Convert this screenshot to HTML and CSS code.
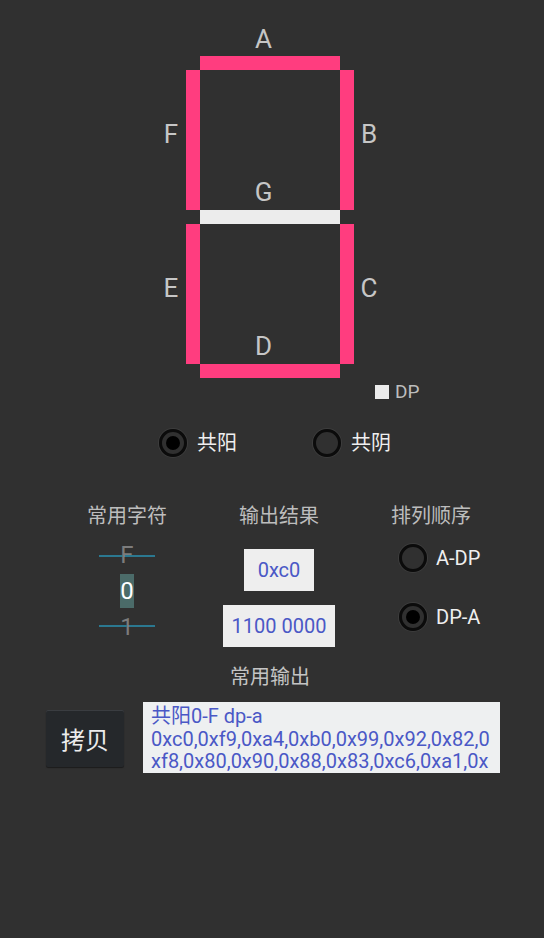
FILE: index.html
```html
<!DOCTYPE html>
<html lang="zh">
<head>
<meta charset="utf-8">
<title>七段数码管</title>
<link rel="stylesheet" href="styles.css">
</head>
<body>
<div class="app">
  <div class="display">
    <span class="lbl lbl-a">A</span>
    <div class="seg on seg-a"></div>
    <span class="lbl lbl-f">F</span>
    <div class="seg on seg-f"></div>
    <span class="lbl lbl-g">G</span>
    <div class="seg on seg-b"></div>
    <span class="lbl lbl-b">B</span>
    <div class="seg off seg-g"></div>
    <span class="lbl lbl-e">E</span>
    <div class="seg on seg-e"></div>
    <span class="lbl lbl-d">D</span>
    <div class="seg on seg-c"></div>
    <span class="lbl lbl-c">C</span>
    <div class="seg on seg-d"></div>
  </div>

  <div class="dp">
    <span class="dp-box"></span>
    <span class="dp-text">DP</span>
  </div>

  <div class="mode">
    <label class="radio"><span class="ring checked"></span><span class="radio-text">共阳</span></label>
    <label class="radio"><span class="ring"></span><span class="radio-text">共阴</span></label>
  </div>

  <div class="cols">
    <div class="col">
      <div class="col-title">常用字符</div>
      <div class="picker">
        <div class="pick-row faded">F</div>
        <div class="pick-row sel"><span class="sel-val">0</span></div>
        <div class="pick-row faded">1</div>
      </div>
    </div>
    <div class="col">
      <div class="col-title">输出结果</div>
      <div class="result">
        <div class="out">0xc0</div>
        <div class="out">1100 0000</div>
      </div>
    </div>
    <div class="col">
      <div class="col-title">排列顺序</div>
      <div class="order">
        <label class="radio"><span class="ring"></span><span class="radio-text">A-DP</span></label>
        <label class="radio"><span class="ring checked"></span><span class="radio-text">DP-A</span></label>
      </div>
    </div>
  </div>

  <div class="section-title">常用输出</div>

  <div class="copy-row">
    <button class="copy-btn">拷贝</button>
    <div class="text-out">共阳0-F dp-a<br>0xc0,0xf9,0xa4,0xb0,0x99,0x92,0x82,0<br>xf8,0x80,0x90,0x88,0x83,0xc6,0xa1,0x</div>
  </div>
</div>
</body>
</html>
```

FILE: styles.css
```css
html, body {
  margin: 0;
  padding: 0;
  background: #303030;
}

body {
  width: 544px;
  height: 938px;
  overflow: hidden;
  font-family: "Roboto", "Noto Sans CJK SC", sans-serif;
}

.app {
  display: flex;
  flex-direction: column;
}

/* seven segment display */
.display {
  display: grid;
  grid-template-columns: 30px 14px 140px 14px 30px;
  grid-template-rows: 56px 14px 140px 14px 140px 14px;
  padding-left: 156px;
}

.seg.on { background: #ff3d7f; }
.seg.off { background: #ececec; }

.lbl {
  font-size: 26px;
  line-height: 26px;
  color: #c6c6c6;
  text-align: center;
}

.lbl-a { grid-column: 3; grid-row: 1; justify-self: center; align-self: end; margin-bottom: 4px; margin-right: 13px; }
.seg-a { grid-column: 3; grid-row: 2; }
.lbl-f { grid-column: 1; grid-row: 3; align-self: start; margin-top: 51px; }
.seg-f { grid-column: 2; grid-row: 3; }
.lbl-g { grid-column: 3; grid-row: 3; justify-self: center; align-self: end; margin-bottom: 5px; margin-right: 13px; }
.seg-b { grid-column: 4; grid-row: 3; }
.lbl-b { grid-column: 5; grid-row: 3; align-self: start; margin-top: 51px; }
.seg-g { grid-column: 3; grid-row: 4; }
.lbl-e { grid-column: 1; grid-row: 5; align-self: start; margin-top: 51px; }
.seg-e { grid-column: 2; grid-row: 5; }
.lbl-d { grid-column: 3; grid-row: 5; justify-self: center; align-self: end; margin-bottom: 5px; margin-right: 13px; }
.seg-c { grid-column: 4; grid-row: 5; }
.lbl-c { grid-column: 5; grid-row: 5; align-self: start; margin-top: 51px; }
.seg-d { grid-column: 3; grid-row: 6; }

/* decimal point */
.dp {
  display: flex;
  align-items: center;
  gap: 6px;
  height: 14px;
  margin-top: 7px;
  padding-left: 375px;
}

.dp-box {
  width: 14px;
  height: 14px;
  background: #ececec;
}

.dp-text {
  font-size: 19px;
  line-height: 14px;
  color: #bdbdbd;
}

/* radio buttons */
.mode {
  display: flex;
  gap: 76px;
  margin-top: 30px;
  padding-left: 159px;
}

.radio {
  display: flex;
  align-items: center;
  gap: 10px;
  height: 28px;
}

.ring {
  box-sizing: border-box;
  width: 28px;
  height: 28px;
  border: 3px solid #0b0b0b;
  border-radius: 50%;
  box-shadow: 0 0 0 1px rgba(70, 70, 70, 0.6);
  display: flex;
  align-items: center;
  justify-content: center;
}

.ring.checked::after {
  content: "";
  width: 14px;
  height: 14px;
  border-radius: 50%;
  background: #000;
}

.radio-text {
  font-size: 20px;
  line-height: 28px;
  color: #efefef;
}

/* three columns */
.cols {
  display: grid;
  grid-template-columns: repeat(3, 152px);
  margin-top: 45px;
  padding-left: 51px;
}

.col {
  display: flex;
  flex-direction: column;
  align-items: center;
}

.col-title {
  font-size: 20px;
  line-height: 28px;
  color: #bdbdbd;
}

.picker {
  position: relative;
  width: 56px;
  margin-top: 7px;
  display: flex;
  flex-direction: column;
  align-items: center;
}

.picker::before,
.picker::after {
  content: "";
  position: absolute;
  left: 0;
  right: 0;
  height: 2px;
  background: #2b7890;
}

.picker::before { top: 18px; }
.picker::after { top: 88px; }

.pick-row {
  height: 36px;
  font-size: 24px;
  line-height: 36px;
  display: flex;
  align-items: center;
}

.pick-row.faded {
  color: #7c7c7c;
  position: relative;
  z-index: 1;
}

.sel-val {
  display: block;
  height: 34px;
  line-height: 34px;
  background: #4b6b69;
  color: #ffffff;
}

.result {
  margin-top: 19px;
  display: flex;
  flex-direction: column;
  align-items: center;
  gap: 14px;
}

.out {
  box-sizing: border-box;
  height: 42px;
  min-width: 70px;
  padding: 0 8.5px;
  background: #eeeeee;
  color: #4a58c6;
  font-size: 20px;
  line-height: 42px;
  text-align: center;
  white-space: nowrap;
}

.order {
  align-self: stretch;
  margin-top: 14px;
  padding-left: 44px;
  display: flex;
  flex-direction: column;
  gap: 31px;
}

.order .radio { gap: 9px; }

/* common output */
.section-title {
  margin-top: 16px;
  padding-right: 4px;
  text-align: center;
  font-size: 20px;
  line-height: 28px;
  color: #c4c4c4;
}

.copy-row {
  display: flex;
  align-items: center;
  gap: 19px;
  margin-top: 11px;
  padding-left: 46px;
}

.copy-btn {
  width: 78px;
  height: 57px;
  margin: 0;
  padding: 0;
  border: none;
  border-radius: 2px;
  background: #25282b;
  box-shadow: inset 0 1px 0 #3a3d41, 0 1px 1px #1c1c1c;
  color: #ececec;
  font-family: "Roboto", "Noto Sans CJK SC", sans-serif;
  font-size: 24px;
  transform: translateY(1px);
}

.text-out {
  box-sizing: border-box;
  width: 357px;
  height: 71px;
  padding: 3px 0 0 8px;
  background: #eef0f1;
  color: #4a58c6;
  font-size: 20px;
  line-height: 22.5px;
  white-space: nowrap;
  overflow: hidden;
}
```
